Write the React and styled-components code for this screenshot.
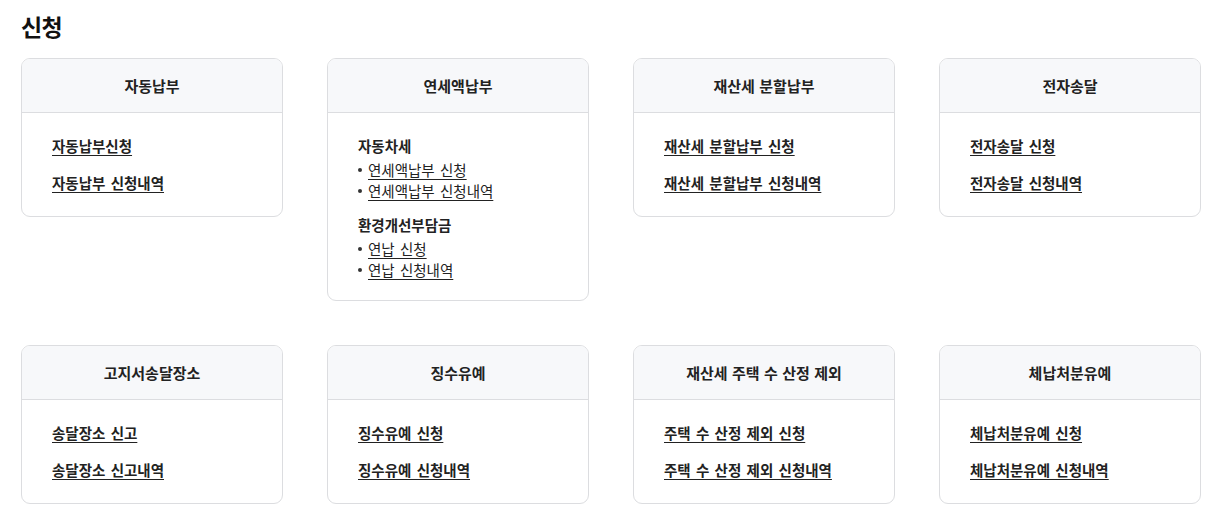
import styled, { createGlobalStyle } from 'styled-components';

const GlobalStyle = createGlobalStyle`
  * { box-sizing: border-box; }
  body {
    margin: 0;
    background: #ffffff;
    font-family: "Noto Sans CJK KR", "Noto Sans", sans-serif;
    color: #222222;
  }
`;

const Page = styled.main`
  padding: 8px 21px 20px;
`;

const PageTitle = styled.h1`
  margin: 0 0 14px;
  font-size: 23px;
  line-height: 36px;
  font-weight: 700;
  letter-spacing: -0.6px;
  color: #111111;
`;

const Grid = styled.div`
  display: grid;
  grid-template-columns: repeat(4, 262px);
  column-gap: 44px;
  row-gap: 44px;
  align-items: start;
`;

const Card = styled.section`
  border: 1px solid #dcdde0;
  border-radius: 9px;
  overflow: hidden;
  background: #ffffff;
`;

const CardHeader = styled.h2`
  margin: 0;
  height: 54px;
  display: flex;
  align-items: center;
  justify-content: center;
  background: #f7f8fa;
  border-bottom: 1px solid #dcdde0;
  font-size: 15px;
  font-weight: 700;
  letter-spacing: 0;
  word-spacing: 1px;
  color: #222222;
`;

const CardBody = styled.div`
  padding: 22px 30px ${({ $bottom }) => $bottom}px;
  display: flex;
  flex-direction: column;
  gap: ${({ $gap }) => $gap}px;
`;

const MainLink = styled.a`
  font-size: 14.5px;
  line-height: 22px;
  font-weight: 700;
  letter-spacing: 0;
  word-spacing: 2px;
  color: #222222;
  text-decoration: underline;
  text-underline-offset: 3px;
  align-self: flex-start;
  cursor: pointer;
`;

const Group = styled.div`
  display: flex;
  flex-direction: column;
`;

const GroupTitle = styled.h3`
  margin: 0 0 2px;
  font-size: 14.5px;
  line-height: 22px;
  font-weight: 700;
  letter-spacing: 0;
  color: #222222;
`;

const BulletList = styled.ul`
  margin: 0;
  padding: 0;
  list-style: none;
`;

const BulletItem = styled.li`
  display: flex;
  align-items: center;
  font-size: 14.5px;
  line-height: 21px;
  letter-spacing: 0;
  word-spacing: 2px;

  &::before {
    content: '';
    width: 4px;
    height: 4px;
    border-radius: 50%;
    background: #333333;
    margin: 0 6px 0 0;
    flex: none;
  }
`;

const SubLink = styled.a`
  color: #222222;
  text-decoration: underline;
  text-underline-offset: 3px;
  cursor: pointer;
`;

const cards = [
  { title: '자동납부', links: ['자동납부신청', '자동납부 신청내역'] },
  {
    title: '연세액납부',
    groups: [
      { title: '자동차세', links: ['연세액납부 신청', '연세액납부 신청내역'] },
      { title: '환경개선부담금', links: ['연납 신청', '연납 신청내역'] },
    ],
  },
  { title: '재산세 분할납부', links: ['재산세 분할납부 신청', '재산세 분할납부 신청내역'] },
  { title: '전자송달', links: ['전자송달 신청', '전자송달 신청내역'] },
  { title: '고지서송달장소', links: ['송달장소 신고', '송달장소 신고내역'] },
  { title: '징수유예', links: ['징수유예 신청', '징수유예 신청내역'] },
  { title: '재산세 주택 수 산정 제외', links: ['주택 수 산정 제외 신청', '주택 수 산정 제외 신청내역'] },
  { title: '체납처분유예', links: ['체납처분유예 신청', '체납처분유예 신청내역'] },
];

const ApplyCard = ({ card }) => (
  <Card>
    <CardHeader>{card.title}</CardHeader>
    {card.groups ? (
      <CardBody $gap={13} $bottom={20}>
        {card.groups.map((group) => (
          <Group key={group.title}>
            <GroupTitle>{group.title}</GroupTitle>
            <BulletList>
              {group.links.map((link) => (
                <BulletItem key={link}>
                  <SubLink>{link}</SubLink>
                </BulletItem>
              ))}
            </BulletList>
          </Group>
        ))}
      </CardBody>
    ) : (
      <CardBody $gap={15} $bottom={22}>
        {card.links.map((link) => (
          <MainLink key={link}>{link}</MainLink>
        ))}
      </CardBody>
    )}
  </Card>
);

export default function App() {
  return (
    <>
      <GlobalStyle />
      <Page>
        <PageTitle>신청</PageTitle>
        <Grid>
          {cards.map((card) => (
            <ApplyCard key={card.title} card={card} />
          ))}
        </Grid>
      </Page>
    </>
  );
}
